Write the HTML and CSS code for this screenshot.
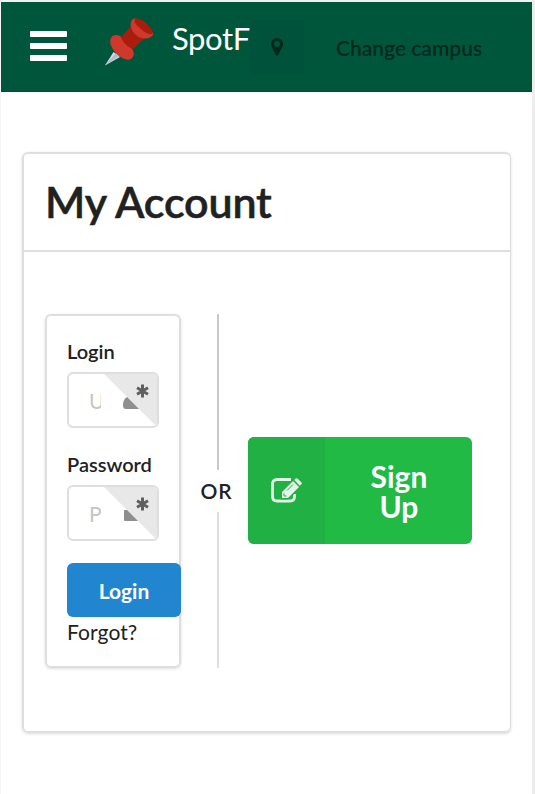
FILE: index.html
```html
<!DOCTYPE html>
<html lang="en">
<head>
<meta charset="utf-8">
<title>My Account</title>
<link rel="stylesheet" href="styles.css">
</head>
<body>
<div class="page">
  <header class="navbar">
    <svg class="menu" width="37" height="30" viewBox="0 0 37 30"><g fill="#fff"><rect width="37" height="6" rx=".8"/><rect y="12" width="37" height="6" rx=".8"/><rect y="24" width="37" height="6" rx=".8"/></g></svg>
    <svg class="pin" width="50" height="50" viewBox="0 0 50 50">
      <path d="M1 48.500 9.500 35l6.500 5Z" fill="#d5d9e3"/>
      <path d="M1 48.500 12 36l3 3Z" fill="#b4bac9"/>
      <path d="M7 21c3-5 9-3 14 2 6 6 12 14 7 18-4 4-11 0-16-5C7 31 5 25 7 21Z" fill="#d0382b"/>
      <path d="M17 20 29 7l13 13-13 12c-5-2-10-6-12-12Z" fill="#a81d0c"/>
      <path d="M28 3c4-4 10 1 15 6 4 4 8 8 5 10-5 4-12 3-16-1-5-4-7-11-4-15Z" fill="#d0382b"/>
      <path d="M31 2c4-2 9 2 12.500 5.500C47 11 50 15 48 17c-3 1-8-2-11-5-4-3-8-7-6-10Z" fill="#a81d0c"/>
    </svg>
    <span class="brand">SpotF</span>
    <a class="campus">
      <span class="campus-icon"><svg width="12" height="18" viewBox="0 0 12 18"><path fill="#00291b" fill-rule="evenodd" d="M6 0a6 6 0 0 1 6 6c0 1-.2 1.800-.5 2.500L7.300 17c-.5 1-2.100 1-2.600 0L.5 8.500C.2 7.800 0 7 0 6a6 6 0 0 1 6-6Zm0 3a3 3 0 1 0 0 6 3 3 0 0 0 0-6Z"/></svg></span>
      <span class="campus-label">Change campus</span>
    </a>
  </header>
  <main class="card">
    <h1>My Account</h1>
    <div class="content">
      <form class="login">
        <label>Login</label>
        <div class="field">
          <span class="placeholder">U</span>
          <svg class="glyph" width="19" height="20" viewBox="0 0 19 20"><path d="M0 16c0-3 1-6.500 4-8h11c2.500 1 4 4 4 8 0 2-1 4-3 4H3c-2 0-3-1-3-4Z"/></svg>
          <svg class="corner" width="55" height="52" viewBox="0 0 55 52"><path d="M0 0h55v52h-3Z" fill="#e8e8e8"/><path d="M38.500 10.500v13M33 13.800l11 6.400M33 20.200l11-6.400" stroke="#5f5f5f" stroke-width="3" fill="none"/></svg>
        </div>
        <label>Password</label>
        <div class="field">
          <span class="placeholder">P</span>
          <svg class="glyph" width="19" height="20" viewBox="0 0 19 20"><path d="M1 8h15v11H2q-1 0-1-1Z"/></svg>
          <svg class="corner" width="55" height="52" viewBox="0 0 55 52"><path d="M0 0h55v52h-3Z" fill="#e8e8e8"/><path d="M38.500 10.500v13M33 13.800l11 6.400M33 20.200l11-6.400" stroke="#5f5f5f" stroke-width="3" fill="none"/></svg>
        </div>
        <button type="button" class="submit">Login</button>
        <a class="forgot">Forgot?</a>
      </form>
      <div class="divider"><span>OR</span></div>
      <button type="button" class="signup">
        <span class="signup-icon"><svg width="31" height="25" viewBox="0 0 31 25">
          <path d="M20 1.500H6Q1.500 1.500 1.500 6v12.500Q1.500 23 6 23h13q4.500 0 4.500-4.500V16" fill="none" stroke="#e4f6e8" stroke-width="2.800"/>
          <path d="m9.500 13 13-12.500 8 8L17.500 21.500h-8Z" fill="#21b044"/>
          <path d="m11 14 11-11 6 6L17 20h-6Z" fill="#e4f6e8"/>
          <path d="m23.200 2 1.500-1.500q1-.8 2 .2L30.300 4.300q1 1 .1 2L28.900 7.800Z" fill="#e4f6e8"/>
          <path d="m16 12.500 6-6M13 15.500v2.500h2.500" stroke="#21b044" stroke-width="1" fill="none"/>
        </svg></span>
        <span class="signup-label"><span>Sign Up</span></span>
      </button>
    </div>
  </main>
</div>
</body>
</html>
```

FILE: styles.css
```css
* { box-sizing: border-box; }
html, body { margin: 0; height: 794px; overflow: hidden; }
body { font-family: Lato, "Liberation Sans", sans-serif; font-size: 21px; color: #212121; background: #fff; }
.page { height: 794px; border: solid #ededed; border-width: 2px 3px 0 1px; border-left-color: #f6f6f6; border-top-color: #f0f2f3; }
.navbar { height: 90px; background: #00563b; border-bottom: 1px solid #004f35; display: flex; align-items: flex-start; padding-left: 29px; }
.menu { margin-top: 29px; flex: none; }
.pin { margin: 15px 0 0 37px; flex: none; }
.brand { width: 78px; margin: 18px 0 0 18px; font-size: 31px; line-height: 37px; letter-spacing: -.4px; color: #fff; white-space: nowrap; }
.campus { display: flex; height: 54px; margin-top: 18px; color: #00291b; font-weight: 600; }
.campus-icon { width: 54px; display: flex; align-items: center; justify-content: center; background: #00533a; border-radius: 5px 0 0 5px; }
.campus-label { margin-left: 32px; line-height: 56px; white-space: nowrap; }
.card { width: 489px; height: 581px; margin: 60px 0 0 21px; border: 2px solid #dedede; border-right-width: 1px; border-radius: 6px; box-shadow: 0 1px 3px rgba(34,36,38,.15); }
h1 { margin: 0; height: 98px; padding: 21px 21px 0; border-bottom: 2px solid #dedede; font-size: 43px; line-height: 54px; font-weight: 600; letter-spacing: -.15px; -webkit-text-stroke: .5px #212121; }
.content { display: flex; padding: 62px 0 0 21px; }
.login { width: 136px; height: 354px; padding: 22px 0 0 20px; border: 2px solid #dedede; border-radius: 6px; box-shadow: 0 1px 3px rgba(34,36,38,.15); }
.login label { display: block; height: 34px; line-height: 26px; font-size: 20px; font-weight: 600; }
.field { position: relative; width: 92px; height: 56px; margin-bottom: 23px; border: 2px solid #dedede; border-radius: 6px; overflow: hidden; }
.placeholder { display: block; width: 12px; margin-left: 20px; overflow: hidden; line-height: 53px; color: #c5c5c5; }
.glyph { position: absolute; left: 54px; top: 15px; fill: #8f8f8f; }
.corner { position: absolute; left: 35px; top: 0; }
.submit { display: block; width: 114px; height: 54px; margin-top: -1px; padding: 1px 0 0; border: 0; border-radius: 6px; background: #2185d0; color: #fff; font: 700 21px/26px Lato, sans-serif; }
.forgot { display: block; line-height: 30px; letter-spacing: .1px; }
.divider { width: 67px; height: 354px; display: flex; flex-direction: column; align-items: center; padding-left: 6px; }
.divider::before { content: ""; width: 2px; height: 156px; background: #c8c8c8; }
.divider::after { content: ""; width: 2px; height: 156px; background: #dedede; }
.divider span { line-height: 42px; font-weight: 600; letter-spacing: 1px; margin-right: 2px; }
.signup { display: flex; width: 224px; height: 107px; margin-top: 123px; padding: 0; border: 0; border-radius: 6px; overflow: hidden; background: #21ba45; color: #fff; font: 700 30px/30px Lato, sans-serif; }
.signup-icon { width: 77px; height: 107px; display: flex; align-items: center; justify-content: center; background: #21b044; }
.signup-label { flex: 1; align-self: center; padding: 1px 32px 0 33px; text-align: center; }
```
